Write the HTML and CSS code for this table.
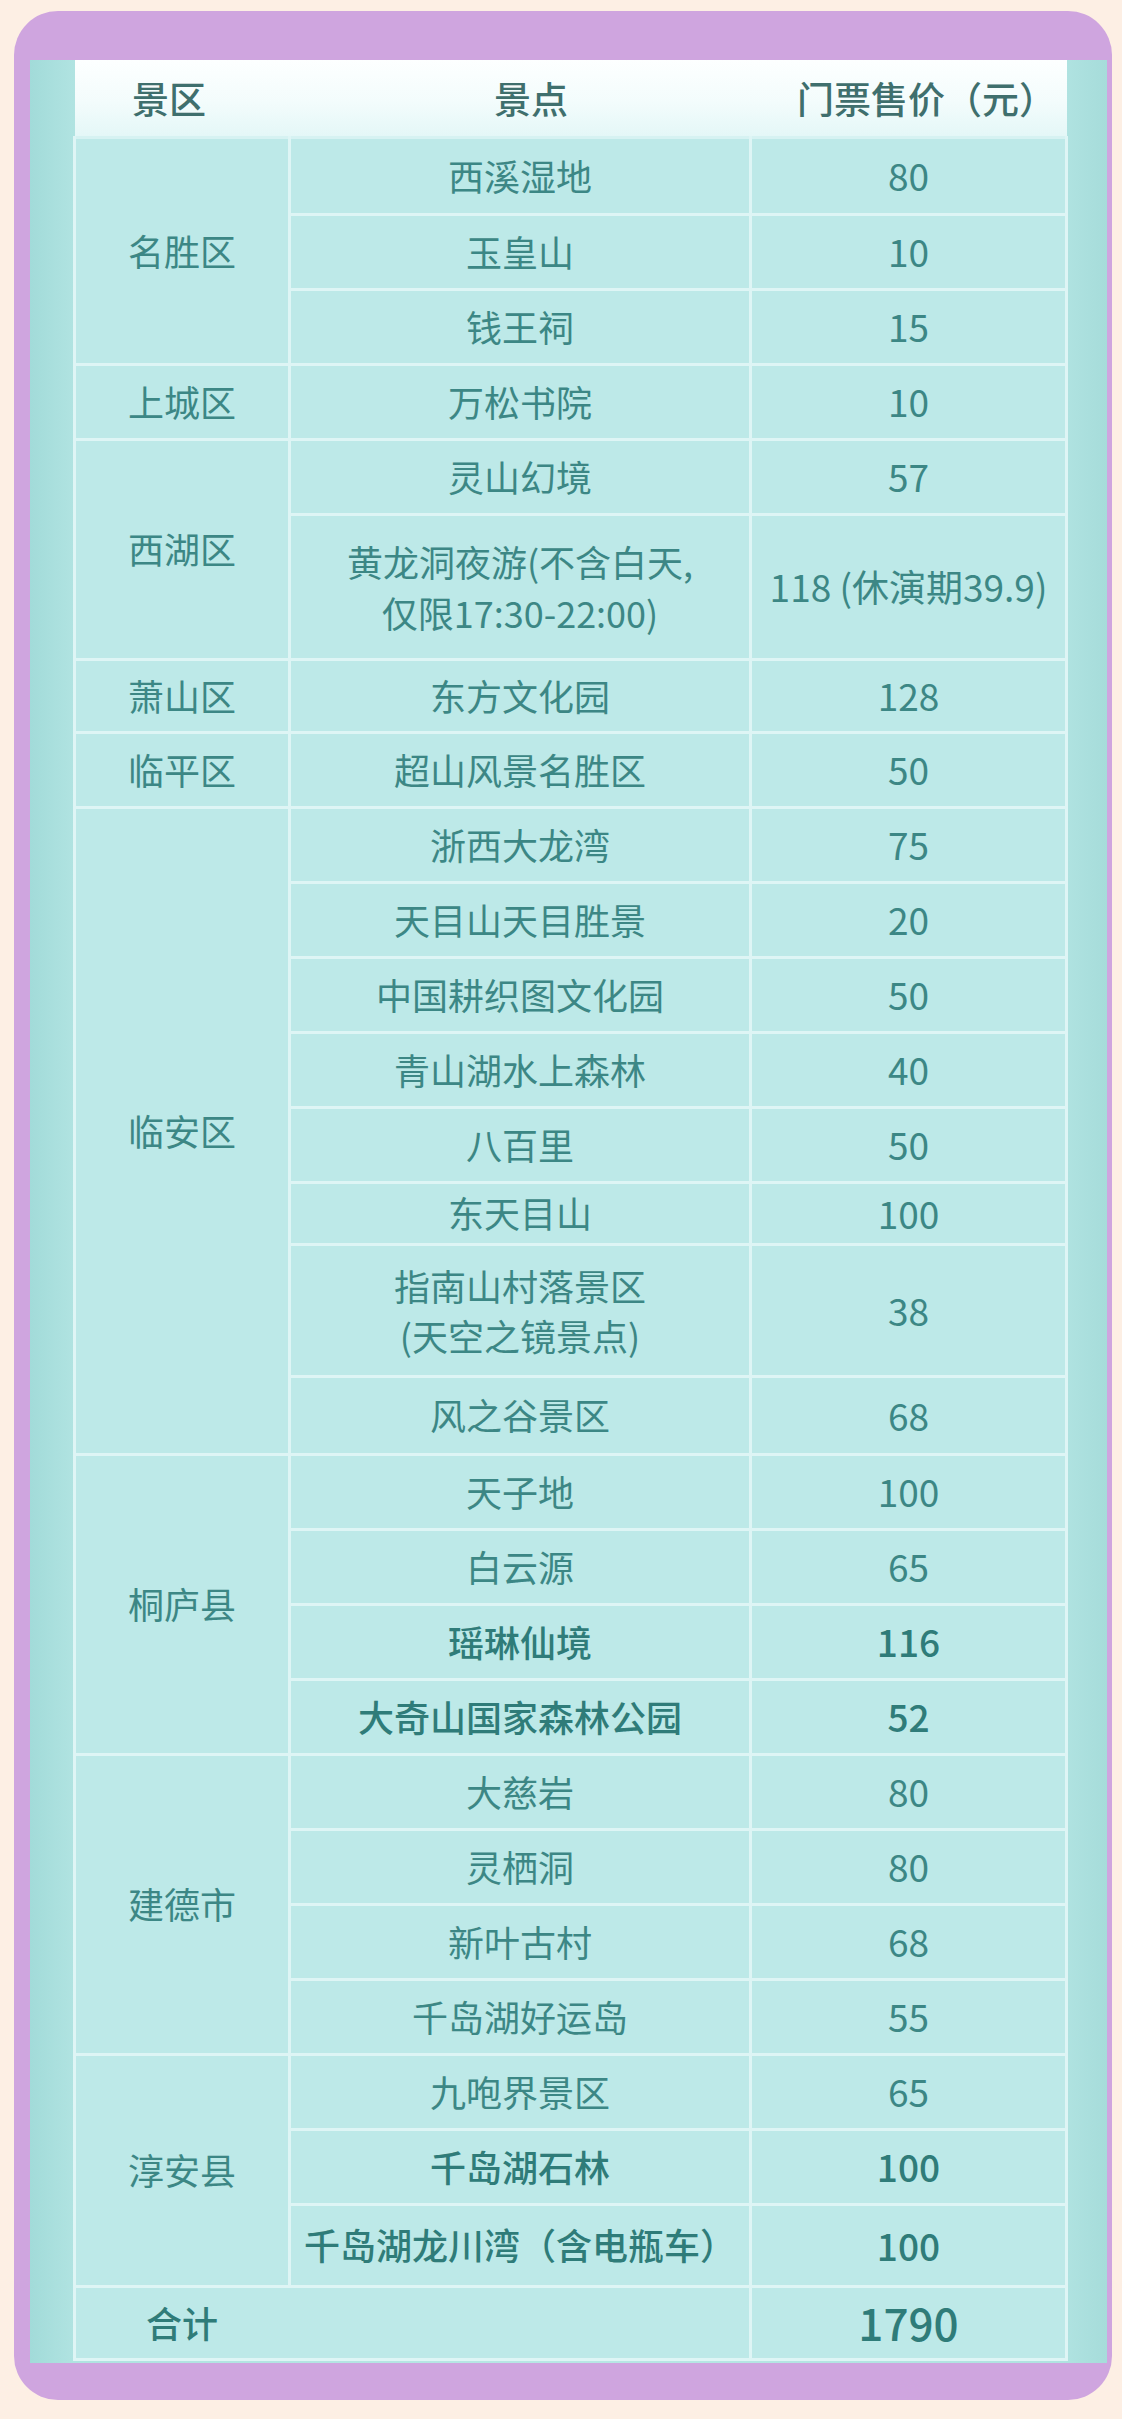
FILE: index.html
```html
<!DOCTYPE html>
<html lang="zh-CN">
<head>
<meta charset="utf-8">
<title>杭州景区门票售价</title>
<link rel="stylesheet" href="styles.css">
</head>
<body>
<div class="frame">
  <div class="panel">
    <table class="tickets">
      <colgroup>
        <col class="c1"><col class="c2"><col class="c3">
      </colgroup>
      <thead>
        <tr class="head">
          <th class="h1">景区</th>
          <th class="h2">景点</th>
          <th class="h3">门票售价（元）</th>
        </tr>
      </thead>
      <tbody>
        <tr class="first"><td rowspan="3">名胜区</td><td>西溪湿地</td><td class="num">80</td></tr>
        <tr><td>玉皇山</td><td class="num">10</td></tr>
        <tr><td>钱王祠</td><td class="num">15</td></tr>
        <tr><td>上城区</td><td>万松书院</td><td class="num">10</td></tr>
        <tr><td rowspan="2">西湖区</td><td>灵山幻境</td><td class="num">57</td></tr>
        <tr class="tall"><td class="multi">黄龙洞夜游(不含白天,<br>仅限17:30-22:00)</td><td class="num">118 (休演期39.9)</td></tr>
        <tr class="slim"><td>萧山区</td><td>东方文化园</td><td class="num">128</td></tr>
        <tr><td>临平区</td><td>超山风景名胜区</td><td class="num">50</td></tr>
        <tr><td rowspan="8">临安区</td><td>浙西大龙湾</td><td class="num">75</td></tr>
        <tr><td>天目山天目胜景</td><td class="num">20</td></tr>
        <tr><td>中国耕织图文化园</td><td class="num">50</td></tr>
        <tr><td>青山湖水上森林</td><td class="num">40</td></tr>
        <tr><td>八百里</td><td class="num">50</td></tr>
        <tr class="short"><td>东天目山</td><td class="num">100</td></tr>
        <tr class="double"><td class="multi">指南山村落景区<br>(天空之镜景点)</td><td class="num">38</td></tr>
        <tr class="plus"><td>风之谷景区</td><td class="num">68</td></tr>
        <tr><td rowspan="4">桐庐县</td><td>天子地</td><td class="num">100</td></tr>
        <tr><td>白云源</td><td class="num">65</td></tr>
        <tr class="bold"><td>瑶琳仙境</td><td class="num">116</td></tr>
        <tr class="bold"><td>大奇山国家森林公园</td><td class="num">52</td></tr>
        <tr><td rowspan="4">建德市</td><td>大慈岩</td><td class="num">80</td></tr>
        <tr><td>灵栖洞</td><td class="num">80</td></tr>
        <tr><td>新叶古村</td><td class="num">68</td></tr>
        <tr><td>千岛湖好运岛</td><td class="num">55</td></tr>
        <tr><td rowspan="3">淳安县</td><td>九咆界景区</td><td class="num">65</td></tr>
        <tr class="bold"><td>千岛湖石林</td><td class="num">100</td></tr>
        <tr class="bold wide"><td>千岛湖龙川湾（含电瓶车）</td><td class="num">100</td></tr>
        <tr class="total"><td colspan="2" class="total-label">合计</td><td class="num total-num">1790</td></tr>
      </tbody>
    </table>
  </div>
</div>
</body>
</html>
```

FILE: styles.css
```css
* {
  box-sizing: border-box;
}

html,
body {
  margin: 0;
  padding: 0;
}

body {
  width: 1122px;
  height: 2419px;
  overflow: hidden;
  background: #fdefe4;
  font-family: "Noto Sans CJK SC", "Noto Sans", sans-serif;
}

.frame {
  margin: 11px 10px 0 14px;
  height: 2389px;
  padding: 49px 5px 37px 16px;
  background: #cfa5df;
  border-radius: 44px;
}

.panel {
  height: 100%;
  padding: 0 42px 0 43px;
  overflow: hidden;
  background: linear-gradient(90deg, #a2dbd9 0%, #b0e3e1 4%, #b8e7e5 50%, #b0e3e1 96%, #a6dcda 100%);
}

.tickets {
  width: 992px;
  table-layout: fixed;
  border-collapse: collapse;
  color: #3c8785;
  font-size: 36px;
  text-align: center;
}

.c1 { width: 215px; }
.c2 { width: 461px; }
.c3 { width: 316px; }

.head {
  height: 77px;
}

.head th {
  padding: 0;
  font-weight: 500;
  font-size: 37px;
  color: #3f6f6d;
  background: linear-gradient(180deg, #fdffff 0%, #f3fcfc 55%, #e4f7f7 100%);
  border: none;
}

.head .h1 { padding-right: 26px; }
.head .h2 { padding-left: 22px; }
.head .h3 { padding-left: 36px; }

.tickets td {
  height: 75px;
  padding: 0 4px;
  border: 3px solid #def5f5;
  background: #bde9e8;
  vertical-align: middle;
  line-height: 1.2;
  font-weight: 400;
}

.tickets tr.first td { height: 77px; border-top-color: #d6f2f2; }
.tickets tr.tall td { height: 145px; }
.tickets tr.slim td { height: 73px; }
.tickets tr.short td { height: 62px; }
.tickets tr.double td { height: 132px; }
.tickets tr.plus td { height: 78px; }
.tickets tr.wide td { height: 82px; }
.tickets tr.total td { height: 73px; }

.tickets td.multi {
  line-height: 1.4;
}

.tickets td.num {
  font-size: 37px;
}

.tickets tr.bold td {
  font-weight: 500;
  color: #2f7c79;
}

.tickets td.total-label {
  text-align: left;
  padding-left: 70px;
  font-weight: 500;
  color: #2f7c79;
}

.tickets td.total-num {
  font-size: 44px;
  font-weight: 500;
  color: #2f7c79;
}
```
